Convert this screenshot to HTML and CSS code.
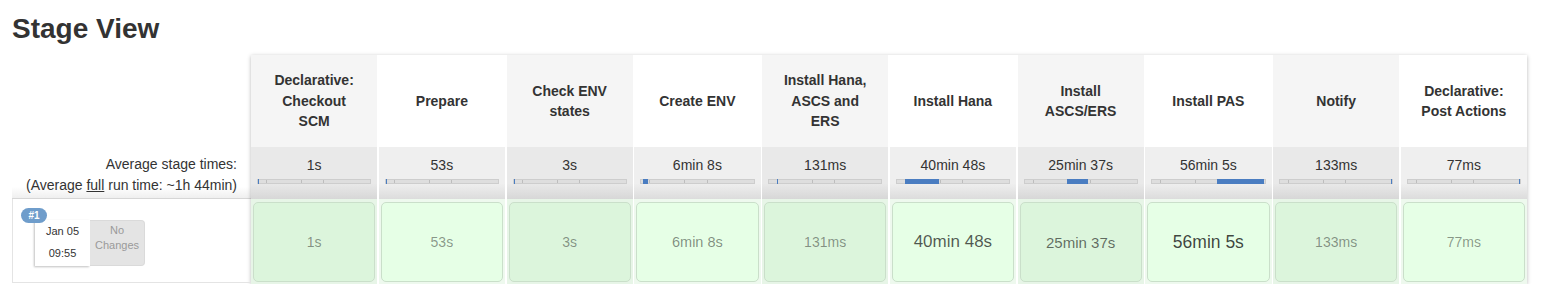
FILE: index.html
```html
<!DOCTYPE html>
<html lang="en">
<head>
    <meta charset="UTF-8">
    <meta name="viewport" content="width=device-width, initial-scale=1.0">
    <title>Stage View</title>
    <link rel="stylesheet" href="styles.css">
</head>
<body>
    <div class="stage-view">
        <h2 class="title">Stage View</h2>
        <div class="sv">
            <div class="sv-left">
                <div class="left-head"></div>
                <div class="left-avg">
                    Average stage times:<br>
                    (Average <a href="#">full</a> run time: ~1h 44min)
                </div>
                <div class="build">
                    <span class="badge">#1</span>
                    <div class="build-info">
                        <div class="date">Jan 05<br>09:55</div>
                        <div class="changes">No<br>Changes</div>
                    </div>
                </div>
            </div>

            <div class="sv-table">
                <!-- stage names -->
                <div class="hd">Declarative: Checkout SCM</div>
                <div class="hd">Prepare</div>
                <div class="hd">Check ENV states</div>
                <div class="hd">Create ENV</div>
                <div class="hd">Install Hana, ASCS and ERS</div>
                <div class="hd">Install Hana</div>
                <div class="hd">Install ASCS/ERS</div>
                <div class="hd">Install PAS</div>
                <div class="hd">Notify</div>
                <div class="hd">Declarative: Post Actions</div>

                <!-- average times -->
                <div class="avg">1s<div class="bar"><span class="fill" style="left:0;width:1px"></span></div></div>
                <div class="avg">53s<div class="bar"><span class="fill" style="left:0;width:1px"></span></div></div>
                <div class="avg">3s<div class="bar"><span class="fill" style="left:0;width:1px"></span></div></div>
                <div class="avg">6min 8s<div class="bar"><span class="fill" style="left:1.8%;width:4.6%"></span></div></div>
                <div class="avg">131ms<div class="bar"><span class="fill" style="left:7%;width:1px"></span></div></div>
                <div class="avg">40min 48s<div class="bar"><span class="fill" style="left:7.5%;width:30.5%"></span></div></div>
                <div class="avg">25min 37s<div class="bar"><span class="fill" style="left:38.2%;width:18.4%"></span></div></div>
                <div class="avg">56min 5s<div class="bar"><span class="fill" style="left:57.8%;width:42.2%"></span></div></div>
                <div class="avg">133ms<div class="bar"><span class="fill" style="right:0;width:1px"></span></div></div>
                <div class="avg">77ms<div class="bar"><span class="fill" style="right:0;width:1px"></span></div></div>

                <!-- build #1 -->
                <div class="run"><div class="cell t1">1s</div></div>
                <div class="run"><div class="cell t1">53s</div></div>
                <div class="run"><div class="cell t1">3s</div></div>
                <div class="run"><div class="cell t2">6min 8s</div></div>
                <div class="run"><div class="cell t1">131ms</div></div>
                <div class="run"><div class="cell t4">40min 48s</div></div>
                <div class="run"><div class="cell t3">25min 37s</div></div>
                <div class="run"><div class="cell t5">56min 5s</div></div>
                <div class="run"><div class="cell t1">133ms</div></div>
                <div class="run"><div class="cell t1">77ms</div></div>
            </div>
        </div>
    </div>
</body>
</html>
```

FILE: styles.css
```css
body {
    margin: 0;
    background-color: #fff;
    color: #333;
    font-family: "Liberation Sans", Helvetica, Arial, sans-serif;
}
.stage-view {
    padding: 0 12px;
}
.title {
    font-size: 28px;
    line-height: 32px;
    margin: 13px 0 10px;
    color: #333;
}
.sv {
    display: flex;
    align-items: flex-start;
}

/* left column */
.sv-left {
    width: 239px;
    flex: none;
}
.left-head {
    height: 92px;
}
.left-avg {
    height: 52px;
    box-sizing: border-box;
    padding: 7px 14px 0 0;
    text-align: right;
    font-size: 14px;
    line-height: 21px;
    background: linear-gradient(#fff 0, #fff 78%, #efefef 100%);
    border-bottom: 1px solid #d6d6d6;
}
.left-avg a {
    color: #333;
    text-decoration: underline;
}
.build {
    position: relative;
    height: 84px;
    box-sizing: border-box;
    padding: 21px 0 0 22px;
    border-left: 1px solid #e4e4e4;
    border-bottom: 1px solid #e4e4e4;
}
.badge {
    position: absolute;
    left: 8px;
    top: 9px;
    z-index: 1;
    width: 26px;
    height: 15px;
    border-radius: 8px;
    background-color: #6f9dcb;
    color: #fff;
    font-size: 10px;
    font-weight: bold;
    line-height: 15px;
    text-align: center;
}
.build-info {
    display: flex;
}
.date {
    width: 55px;
    height: 46px;
    background-color: #fff;
    box-shadow: -1px 1px 2px rgba(0,0,0,0.25);
    font-size: 11px;
    line-height: 22px;
    text-align: center;
    color: #333;
}
.changes {
    width: 55px;
    height: 46px;
    box-sizing: border-box;
    padding-top: 2px;
    background-color: #e4e4e4;
    border: 1px solid #dadada;
    border-left: none;
    border-radius: 0 4px 4px 0;
    color: #9a9a9a;
    font-size: 11px;
    line-height: 15px;
    text-align: center;
}

/* stage table */
.sv-table {
    width: 1276px;
    flex: none;
    display: grid;
    grid-template-columns: repeat(10, 1fr);
    grid-template-rows: 92px 52px 85px;
    column-gap: 1.5px;
    background-color: #fff;
    box-shadow: 0 1px 4px rgba(0,0,0,0.28);
}
.hd {
    display: flex;
    align-items: center;
    justify-content: center;
    padding: 0 18px;
    text-align: center;
    font-size: 14px;
    font-weight: bold;
    line-height: 20.5px;
    background-color: #fff;
}
.hd:nth-child(odd) {
    background-color: #f5f5f5;
}
.avg {
    padding: 9px 6px 0;
    text-align: center;
    font-size: 14px;
    line-height: 18px;
    background: linear-gradient(#efefef 0, #efefef 70%, #dcdcdc 100%);
}
.avg:nth-child(odd) {
    background: linear-gradient(#e9e9e9 0, #e9e9e9 70%, #d7d7d7 100%);
}
.bar {
    position: relative;
    height: 5px;
    margin-top: 5px;
    box-sizing: border-box;
    border: 1px solid #cdcdcd;
    background:
        linear-gradient(to right,
            transparent 7%, #bdbdbd 7%, #bdbdbd calc(7% + 1px), transparent calc(7% + 1px),
            transparent 38%, #bdbdbd 38%, #bdbdbd calc(38% + 1px), transparent calc(38% + 1px),
            transparent 58%, #bdbdbd 58%, #bdbdbd calc(58% + 1px), transparent calc(58% + 1px)),
        #dedede;
}
.fill {
    position: absolute;
    top: -1px;
    bottom: -1px;
    min-width: 1px;
    background-color: #4a7dc1;
}
.run {
    padding: 3px 2px 2px;
    background-color: #eef9ee;
}
.run:nth-child(odd) {
    background-color: #e7f5e7;
}
.cell {
    height: 100%;
    box-sizing: border-box;
    display: flex;
    align-items: center;
    justify-content: center;
    border: 1px solid #cadfca;
    border-radius: 5px;
    background-color: #e6ffe6;
}
.run:nth-child(odd) .cell {
    background-color: #dcf5dc;
}
.t1 {
    font-size: 14px;
    color: rgba(0,0,0,0.42);
}
.t2 {
    font-size: 14.5px;
    color: rgba(0,0,0,0.45);
}
.t3 {
    font-size: 15px;
    color: rgba(0,0,0,0.58);
}
.t4 {
    font-size: 17px;
    color: rgba(0,0,0,0.66);
}
.t5 {
    font-size: 17.5px;
    color: rgba(0,0,0,0.74);
}
```
